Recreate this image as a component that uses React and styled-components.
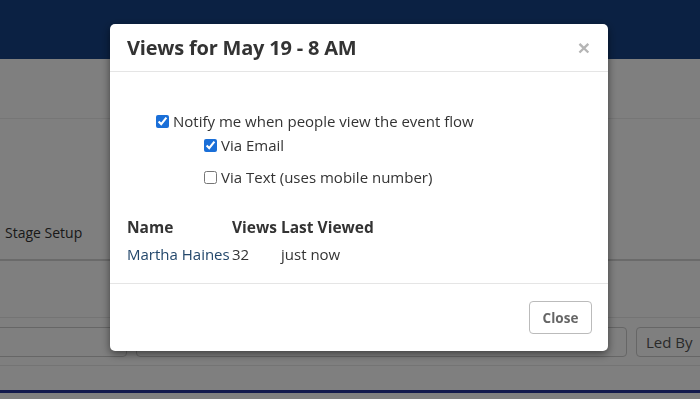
import styled, { createGlobalStyle } from "styled-components";

const GlobalStyle = createGlobalStyle`
  html, body {
    margin: 0;
    padding: 0;
  }
  *, *::before, *::after {
    box-sizing: border-box;
  }
  body {
    font-family: "Open Sans", "Noto Sans", sans-serif;
    color: #333;
    overflow: hidden;
  }
`;

const App = () => {
  return (
    <>
      <GlobalStyle />
      <Page>
        <TopBar />
        <SubNav />
        <TabArea>
          <Tab>Stage Setup</Tab>
        </TabArea>
        <Spacer />
        <FilterRow>
          <Input $width="140px" $offset="0 0 0 -13px" />
          <Input $grow />
          <Input $width="80px" $offset="0 -16px 0 0">Led By</Input>
        </FilterRow>
        <Gap />
        <BottomRule />
      </Page>

      <Backdrop>
        <Modal>
          <Header>
            <Title>Views for May 19 - 8 AM</Title>
            <CloseX>×</CloseX>
          </Header>
          <Body>
            <Options>
              <Check>
                <input type="checkbox" defaultChecked />
                Notify me when people view the event flow
              </Check>
              <SubOptions>
                <Check>
                  <input type="checkbox" defaultChecked />
                  Via Email
                </Check>
                <Check $gap>
                  <input type="checkbox" />
                  Via Text (uses mobile number)
                </Check>
              </SubOptions>
            </Options>
            <Table>
              <Th>Name</Th>
              <Th>Views</Th>
              <Th>Last Viewed</Th>
              <Td as="a" $link>Martha Haines</Td>
              <Td>32</Td>
              <Td>just now</Td>
            </Table>
          </Body>
          <Footer>
            <Button>Close</Button>
          </Footer>
        </Modal>
      </Backdrop>
    </>
  );
};

export default App;

const Page = styled.div`
  width: 700px;
  height: 399px;
  background: #fff;
  display: flex;
  flex-direction: column;
`;
const TopBar = styled.div`
  height: 59px;
  background: #174386;
`;
const SubNav = styled.div`
  height: 60px;
  border-bottom: 1px solid #ececec;
`;
const TabArea = styled.div`
  height: 142px;
  border-bottom: 2px solid #d4d4d4;
  display: flex;
  align-items: flex-end;
`;
const Tab = styled.div`
  font-size: 14px;
  color: #333;
  padding: 0 0 17px 5px;
`;
const Spacer = styled.div`
  height: 57px;
  border-bottom: 1px solid #e8e8e8;
`;
const FilterRow = styled.div`
  display: flex;
  gap: 9px;
  padding: 9px 0 8px;
  border-bottom: 1px solid #e8e8e8;
`;
const Input = styled.div`
  width: ${(p) => p.$width || "auto"};
  flex: ${(p) => (p.$grow ? 1 : "none")};
  margin: ${(p) => p.$offset || "0"};
  height: 30px;
  border: 1px solid #ccc;
  border-radius: 4px;
  font-size: 15px;
  color: #555;
  padding-left: 9px;
  display: flex;
  align-items: center;
`;
const Gap = styled.div`
  height: 24px;
`;
const BottomRule = styled.div`
  height: 3px;
  background: #223099;
`;

const Backdrop = styled.div`
  position: fixed;
  inset: 0;
  background: rgba(0, 0, 0, 0.5);
`;
const Modal = styled.div`
  position: absolute;
  left: 110px;
  top: 24px;
  width: 498px;
  background: #fff;
  border-radius: 5px;
  box-shadow: 0 3px 9px rgba(0, 0, 0, 0.5);
`;
const Header = styled.div`
  height: 48px;
  border-bottom: 1px solid #e5e5e5;
  display: flex;
  align-items: center;
  justify-content: space-between;
  padding: 0 18px 0 17px;
`;
const Title = styled.h4`
  margin: 0;
  font-size: 20px;
  font-weight: 700;
  color: #333;
  letter-spacing: -0.2px;
`;
const CloseX = styled.span`
  font-family: "Liberation Sans", Arial, sans-serif;
  font-size: 21px;
  font-weight: 700;
  color: #b5b5b5;
  line-height: 1;
`;
const Body = styled.div`
  height: 212px;
  padding: 0 17px;
  border-bottom: 1px solid #e5e5e5;
  display: flex;
  flex-direction: column;
`;
const Options = styled.div`
  margin-top: 37px;
  padding-left: 29px;
`;
const SubOptions = styled.div`
  padding-left: 48px;
`;
const Check = styled.label`
  display: flex;
  align-items: center;
  gap: 4px;
  font-size: 15px;
  color: #333;
  height: 24px;
  margin-top: ${(p) => (p.$gap ? "8px" : "0")};
  input {
    margin: 0;
    width: 13px;
    height: 13px;
    accent-color: #1a6fd8;
  }
`;
const Table = styled.div`
  display: grid;
  grid-template-columns: 105px 49px auto;
  row-gap: 3px;
  margin-top: 26px;
`;
const Th = styled.div`
  font-size: 15.5px;
  font-weight: 700;
  color: #333;
  line-height: 24px;
  white-space: nowrap;
`;
const Td = styled.div`
  font-size: 15px;
  color: ${(p) => (p.$link ? "#23476b" : "#333")};
  line-height: 24px;
  white-space: nowrap;
  text-decoration: none;
`;
const Footer = styled.div`
  height: 67px;
  display: flex;
  align-items: center;
  justify-content: flex-end;
  padding: 0 16px;
`;
const Button = styled.button`
  width: 63px;
  height: 33px;
  border: 1px solid #bbb;
  border-radius: 4px;
  background: #fff;
  font-family: "Open Sans", sans-serif;
  font-size: 13.5px;
  font-weight: 700;
  color: #666;
`;
